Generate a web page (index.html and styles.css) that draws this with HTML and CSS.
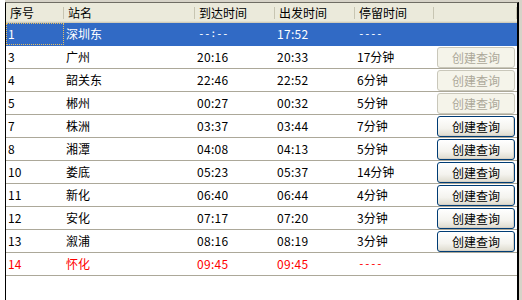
FILE: index.html
```html
<!DOCTYPE html>
<html>
<head>
<meta charset="utf-8">
<link rel="stylesheet" href="styles.css">
</head>
<body>
<div class="screen">
  <div class="window">
    <div class="row head">
      <div class="hc">序号</div>
      <div class="hc">站名</div>
      <div class="hc">到达时间</div>
      <div class="hc">出发时间</div>
      <div class="hc">停留时间</div>
      <div class="hc"></div>
    </div>
    <div class="row sel">
      <div class="c focus">1</div><div class="c">深圳东</div><div class="c t d">--:--</div><div class="c t">17:52</div><div class="c d">----</div><div class="c b"></div>
    </div>
    <div class="row">
      <div class="c">3</div><div class="c">广州</div><div class="c t">20:16</div><div class="c t">20:33</div><div class="c">17分钟</div><div class="c b"><button class="btn off">创建查询</button></div>
    </div>
    <div class="row">
      <div class="c">4</div><div class="c">韶关东</div><div class="c t">22:46</div><div class="c t">22:52</div><div class="c">6分钟</div><div class="c b"><button class="btn off">创建查询</button></div>
    </div>
    <div class="row">
      <div class="c">5</div><div class="c">郴州</div><div class="c t">00:27</div><div class="c t">00:32</div><div class="c">5分钟</div><div class="c b"><button class="btn off">创建查询</button></div>
    </div>
    <div class="row">
      <div class="c">7</div><div class="c">株洲</div><div class="c t">03:37</div><div class="c t">03:44</div><div class="c">7分钟</div><div class="c b"><button class="btn">创建查询</button></div>
    </div>
    <div class="row">
      <div class="c">8</div><div class="c">湘潭</div><div class="c t">04:08</div><div class="c t">04:13</div><div class="c">5分钟</div><div class="c b"><button class="btn">创建查询</button></div>
    </div>
    <div class="row">
      <div class="c">10</div><div class="c">娄底</div><div class="c t">05:23</div><div class="c t">05:37</div><div class="c">14分钟</div><div class="c b"><button class="btn">创建查询</button></div>
    </div>
    <div class="row">
      <div class="c">11</div><div class="c">新化</div><div class="c t">06:40</div><div class="c t">06:44</div><div class="c">4分钟</div><div class="c b"><button class="btn">创建查询</button></div>
    </div>
    <div class="row">
      <div class="c">12</div><div class="c">安化</div><div class="c t">07:17</div><div class="c t">07:20</div><div class="c">3分钟</div><div class="c b"><button class="btn">创建查询</button></div>
    </div>
    <div class="row">
      <div class="c">13</div><div class="c">溆浦</div><div class="c t">08:16</div><div class="c t">08:19</div><div class="c">3分钟</div><div class="c b"><button class="btn">创建查询</button></div>
    </div>
    <div class="row red">
      <div class="c">14</div><div class="c">怀化</div><div class="c t">09:45</div><div class="c t">09:45</div><div class="c d">----</div><div class="c b"></div>
    </div>
  </div>
</div>
</body>
</html>
```

FILE: styles.css
```css
html, body {
  margin: 0;
  padding: 0;
}
body {
  width: 522px;
  height: 300px;
  overflow: hidden;
  background: #ece9d8;
  font-family: "Noto Sans CJK SC", "Liberation Sans", sans-serif;
  font-size: 12px;
}
.screen {
  padding: 2px 3px 0 5px;
  height: 310px;
  background: linear-gradient(to right, #ffffff 0, #ffffff 5px, #d6d3c8 5px);
}
.window {
  height: 100%;
  background: #ffffff;
  border-left: 1px solid #000000;
  border-top: 1px solid #6f6d64;
  border-right: 2px solid #000000;
}
.row {
  display: grid;
  grid-template-columns: 58px 131px 80px 80px 79px 83px;
  height: 22px;
  border-bottom: 1px solid #aca899;
  align-items: center;
}
.head {
  height: 19px;
  background: #ebeadb;
  border-bottom: 1px solid #d0cdbc;
  box-shadow: inset 0 -1px 0 #e2dfd0;
}
.hc {
  position: relative;
  padding-left: 4px;
  height: 19px;
  line-height: 19px;
  color: #000;
}
.hc::after {
  content: "";
  position: absolute;
  right: 0;
  top: 4px;
  bottom: 3px;
  width: 1px;
  background: #c7c5b2;
}
.c {
  padding-left: 2px;
  height: 22px;
  line-height: 22px;
  white-space: nowrap;
  color: #000;
}
.t {
  letter-spacing: 0.3px;
}
.d {
  font-family: "DejaVu Sans Mono", monospace;
  font-size: 11px;
  letter-spacing: -0.6px;
  padding-left: 3px;
}
.sel {
  background: #316ac5;
  border-bottom-color: #316ac5;
}
.sel .c {
  color: #ffffff;
}
.focus {
  outline: 1px dotted #e8c060;
  outline-offset: -1px;
}
.red .c {
  color: #ff0000;
}
.b {
  padding-left: 3px;
  display: flex;
  align-items: center;
}
.btn {
  width: 78px;
  height: 21px;
  padding: 0;
  font-family: inherit;
  font-size: 12px;
  color: #000;
  border: 1px solid #003c74;
  border-radius: 3px;
  background: linear-gradient(#ffffff, #f4f3ee 60%, #dedbce);
  box-shadow: inset -1px -1px 0 #d6d0c5;
}
.btn.off {
  color: #aca899;
  border-color: #c9c7ba;
  background: #f5f4ea;
  box-shadow: none;
}
```
